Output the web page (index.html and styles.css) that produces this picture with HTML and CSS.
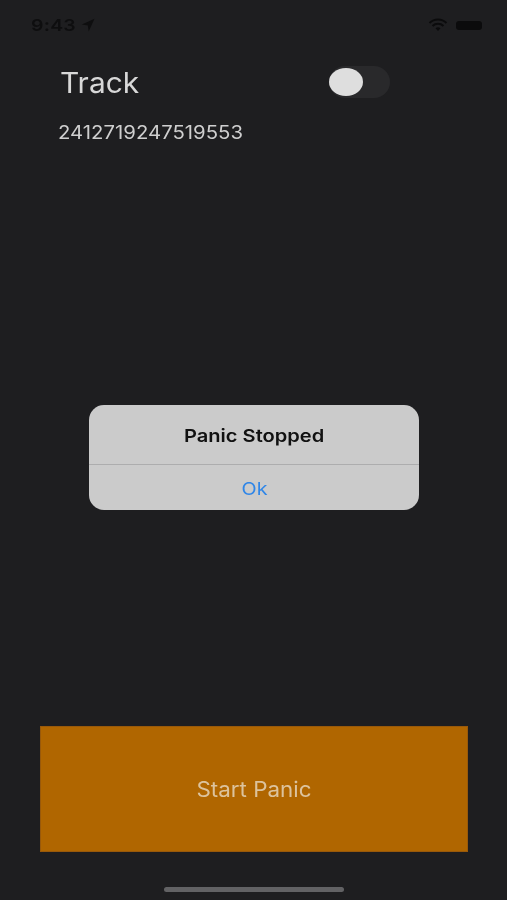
FILE: index.html
```html
<!DOCTYPE html>
<html lang="en">
<head>
<meta charset="utf-8">
<title>Panic</title>
<link rel="stylesheet" href="styles.css">
</head>
<body>
<div class="screen">
  <div class="status">
    <div class="status-left">
      <span class="time">9:43</span>
      <svg class="arrow" viewBox="0 0 14 14" width="14" height="14"><path d="M13.5 .8 .8 6.4l6 1 .9 6z" fill="#0e0e0f"/></svg>
    </div>
    <div class="status-right">
      <svg class="wifi" viewBox="0 0 20 14" width="20" height="14"><path d="M1.5 5a12 12 0 0 1 17 0M4.5 8a8 8 0 0 1 11 0" fill="none" stroke="#0b0b0c" stroke-width="2"/><path d="M7.5 10.2a4 4 0 0 1 5 0L10 13z" fill="#0b0b0c"/></svg>
      <span class="battery"></span>
    </div>
  </div>
  <div class="track-row">
    <span class="track-label">Track</span>
    <span class="toggle"><span class="knob"></span></span>
  </div>
  <p class="number">2412719247519553</p>
  <div class="spacer"></div>
  <div class="panic-button"><span class="panic-text">Start Panic</span></div>
  <div class="home-wrap"><span class="home"></span></div>
  <div class="alert">
    <div class="alert-title"><span class="alert-title-text">Panic Stopped</span></div>
    <div class="alert-action"><span class="alert-action-text">Ok</span></div>
  </div>
</div>
</body>
</html>
```
FILE: styles.css
```css
* { box-sizing: border-box; }
html, body { margin: 0; padding: 0; }
body { background: #1e1e20; font-family: "Inter", "Liberation Sans", sans-serif; }
.screen { position: relative; width: 507px; height: 900px; display: flex; flex-direction: column; overflow: hidden; filter: blur(.6px); }
.status { height: 52px; padding: 0 25px 2px 31px; display: flex; justify-content: space-between; align-items: center; }
.status-left { display: flex; align-items: center; gap: 6px; }
.time { width: 44px; font-size: 16.5px; font-weight: 600; color: #0e0e0f; letter-spacing: .2px; white-space: nowrap; transform: scaleX(1.18); transform-origin: left center; }
.status-right { display: flex; align-items: center; gap: 8px; }
.battery { width: 26px; height: 9px; border-radius: 3px; background: #0b0b0c; }
.track-row { height: 60px; padding: 0 117px 0 60px; display: flex; justify-content: space-between; align-items: center; }
.track-label { font-size: 28.5px; color: #d8d8d8; transform: scaleX(1.05); transform-origin: left center; }
.toggle { width: 61px; height: 32px; border-radius: 16px; background: #29292b; padding: 2px 0 0; display: flex; }
.knob { width: 34px; height: 28px; border-radius: 50%; background: #dedede; }
.number { margin: 8px 0 0 58px; font-size: 18px; line-height: 26px; color: #cfcfcf; transform: scaleX(1.13); transform-origin: left center; }
.spacer { flex: 1; }
.panic-button { margin: 0 39px 0 40px; height: 126px; background: #b06600; border: 1px solid #99590a; color: #dcc39d; font-size: 21px; display: flex; align-items: center; justify-content: center; }
.panic-text { transform: scaleX(1.065); }
.home-wrap { height: 48px; display: flex; justify-content: center; align-items: flex-end; padding-bottom: 8px; }
.home { width: 180px; height: 5px; border-radius: 3px; background: #626264; }
.alert { position: absolute; left: 89px; top: 405px; width: 330px; height: 105px; border-radius: 15px; background: #cbcbcb; display: flex; flex-direction: column; }
.alert-title { height: 60px; padding-top: 1px; border-bottom: 1px solid #adadae; display: flex; align-items: center; justify-content: center; font-size: 17.5px; font-weight: 600; color: #111; }
.alert-title-text { transform: scaleX(1.148); }
.alert-action { flex: 1; padding-top: 1px; display: flex; align-items: center; justify-content: center; font-size: 17.5px; color: #2f86e8; }
.alert-action-text { transform: scaleX(1.13); }
```
